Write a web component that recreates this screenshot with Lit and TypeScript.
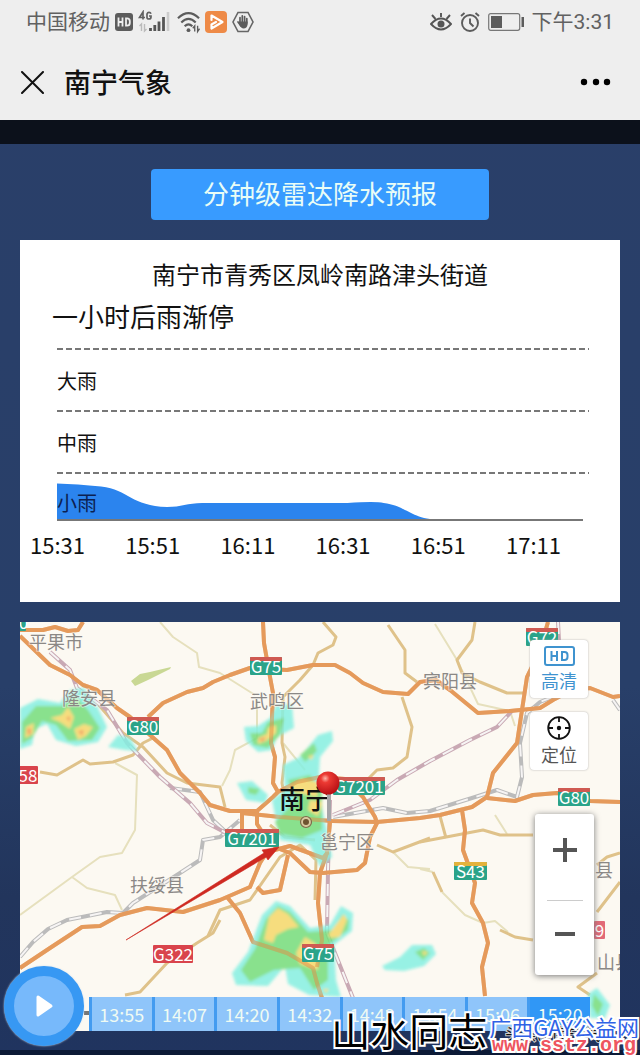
import { LitElement, html, css, svg } from "lit";
import { customElement, property, state } from "lit/decorators.js";
import { classMap } from "lit/directives/class-map.js";

/* ---------- status bar ---------- */

@customElement("status-bar")
class StatusBar extends LitElement {
  static styles = css`
    :host {
      display: flex;
      justify-content: space-between;
      align-items: center;
      height: 44px;
      padding: 0 26px;
      color: #616161;
      font: 21px/28px Roboto, "Noto Sans CJK SC", sans-serif;
    }
    .side {
      display: flex;
      align-items: center;
      gap: 5px;
    }
    .end {
      gap: 8px;
    }
    svg {
      display: block;
    }
  `;

  render() {
    return html`
      <div class="side">
        <span>中国移动</span>
        <svg width="18" height="22" viewBox="0 0 18 22" aria-hidden="true">
          <rect y="2" width="18" height="18" rx="3" fill="#5c5c5c" />
          <path d="M3.500 6.500v9M7.500 6.500v9M3.500 11h4M11 7.300v7.400h1q2.800 0 2.800-2.700v-2q0-2.700-2.800-2.700z" fill="none" stroke="#eee" stroke-width="1.800" />
        </svg>
        <svg width="34" height="24" viewBox="0 0 34 24" aria-hidden="true">
          <path d="M5 9.500V2L1.500 7.500H7M13 3.800Q12.500 2.300 11 2.300T9 4v3.500Q9 9 11 9t2-2V6h-2" fill="none" stroke="#616161" stroke-width="1.700" />
          <path d="M3.500 21v-7l-2 2M6.500 14v7l2-2" fill="none" stroke="#bbb" stroke-width="1.400" />
          <path d="M12.500 21v-3M16.800 21v-6M21 21V11.500M25.500 21V7" stroke="#555" stroke-width="2.800" />
          <path d="M30 21V2" stroke="#ccc" stroke-width="2.600" />
        </svg>
        <svg width="23" height="24" viewBox="0 0 24 24" aria-hidden="true">
          <g fill="none" stroke="#5c5c5c" stroke-width="2.200">
            <path d="M1 8Q12-2.500 23 8M4.500 12.500Q12 5 19.500 12.500M8 16.500q4-4 8 0" />
            <path d="M18.500 22v-6l-2 2.500M21.500 16v6l2-3" stroke-width="1.400" />
          </g>
          <circle cx="12" cy="20.500" r="2" fill="#5c5c5c" />
        </svg>
        <svg width="22" height="22" viewBox="0 0 22 22" aria-hidden="true">
          <rect width="22" height="22" rx="4" fill="#ee8a47" />
          <path d="M6.500 9V4.500L17.500 11 6.500 17.500V13.500L11 11" fill="none" stroke="#fff" stroke-width="2.200" stroke-linejoin="round" stroke-linecap="round" />
        </svg>
        <svg width="22" height="22" viewBox="0 0 22 22" aria-hidden="true">
          <path d="M6 1.500h10l5 9.500-5 9.500H6L1 11z" fill="none" stroke="#666" stroke-width="1.600" />
          <path d="M8 12V6.500M10.300 11V4.800M12.600 11V5.500M14.800 12V7.500M6 11l3 4" stroke="#5c5c5c" stroke-width="1.700" stroke-linecap="round" />
          <path d="M7.200 10.500h8.400v3q-.6 4-4 4-2.500 0-4.400-4z" fill="#5c5c5c" />
        </svg>
      </div>
      <div class="side end">
        <svg width="22" height="22" viewBox="0 0 22 22" fill="none" stroke="#555" stroke-width="1.900" aria-hidden="true">
          <path d="M1 13q10-11 20 0-10 11-20 0zM11 6V2M5.500 8 2 4M16.500 8 20 4" />
          <circle cx="11" cy="13" r="3.500" fill="#555" stroke="none" />
        </svg>
        <svg width="20" height="22" viewBox="0 0 20 22" fill="none" stroke="#5c5c5c" stroke-width="1.900" aria-hidden="true">
          <circle cx="10" cy="12" r="8" />
          <path d="M10 7.500V12l3.500 3.500M1 5l3.500-3M19 5l-3.500-3" />
        </svg>
        <svg width="36" height="18" viewBox="0 0 36 18" aria-hidden="true">
          <rect x=".7" y=".7" width="31" height="16.600" rx="2" fill="none" stroke="#777" stroke-width="1.200" />
          <path d="M3 3h11v12H3zM33.500 4H36v10h-2.500z" fill="#5c5c5c" />
        </svg>
        <span>下午3:31</span>
      </div>
    `;
  }
}

/* ---------- rainfall chart ---------- */

@customElement("rain-chart")
class RainChart extends LitElement {
  static styles = css`
    :host {
      display: block;
      padding: 20px 0 42px;
      background: #fff;
      color: #111;
    }
    h2,
    p {
      margin: 0;
      font-weight: 400;
    }
    .place {
      font-size: 24px;
      line-height: 28px;
      text-align: center;
    }
    .summary {
      padding: 10px 32px 0;
      font-size: 26px;
      line-height: 36px;
    }
    .levels {
      padding: 14px 31px 0 37px;
    }
    .level {
      position: relative;
      box-sizing: border-box;
      height: 62px;
      padding-top: 18px;
      font-size: 20px;
      line-height: 30px;
      background: repeating-linear-gradient(90deg, #777 0 6px, transparent 6px 9px) top / 100% 2px no-repeat;
    }
    .lowest {
      height: 49px;
      padding-top: 16px;
    }
    .label {
      position: relative;
    }
    .lowest .label {
      color: #0b1f52;
    }
    .area {
      position: absolute;
      inset: auto 6px 0 0;
      width: calc(100% - 6px);
      height: 38px;
    }
    .times {
      display: flex;
      justify-content: space-between;
      padding: 7px 59px 0 10px;
      font-size: 22px;
      line-height: 32px;
    }
  `;

  @property({ attribute: false }) times: string[] = [];

  render() {
    return html`
      <h2 class="place">南宁市青秀区凤岭南路津头街道</h2>
      <p class="summary">一小时后雨渐停</p>
      <div class="levels">
        <div class="level"><span class="label">大雨</span></div>
        <div class="level"><span class="label">中雨</span></div>
        <div class="level lowest">
          <svg class="area" viewBox="0 0 525 38" preserveAspectRatio="none" aria-hidden="true">
            <path d="M0 .5Q20 1 44 3.500C72 7 74 23 110 24 124 24 130 20 145 20H290Q318 18 326 20C350 23 352 36 383 37H0z" fill="#2b84ee" />
            <path d="M0 37H525" stroke="#777" stroke-width="2" />
          </svg>
          <span class="label">小雨</span>
        </div>
      </div>
      <div class="times">${this.times.map((t) => html`<time>${t}</time>`)}</div>
    `;
  }
}

/* ---------- radar map ---------- */

const highways = [
  "M20 630H43L55 627 68 631 78 630 83 622",
  "M20 636 50 665 70 675 83 685 97 690 117 708 130 717 150 735 167 750 180 773 200 793 210 805 230 811H257L273 797 278 792 297 782 320 777 345 779 363 797 375 817 377 823 370 837 365 863 357 870 323 873 310 872 290 853 277 848 266 838 257 824 257 811",
  "M148 717 163 703 187 692 203 688 213 682 230 675 250 668 287 670 313 665H335L350 673 363 683 383 692 408 694 420 682 436 680 450 690 478 713 510 711 540 708 553 700 572 690 590 688 613 697 620 696",
  "M263 622 264 643 270 677 273 693 271 743 275 757 273 783 278 792",
  "M548 622 540 650 527 677 522 710 517 743 493 773 487 797 472 807 440 815 420 818 377 822 332 821 280 817 242 813V830",
  "M487 798 515 801 533 795 557 793 590 801 620 802",
  "M462 810 465 830 463 850 475 883 472 903 483 923 488 943 482 967 485 996",
  "M20 968 50 948 82 927 100 926 120 915 147 908 183 912 220 900 227 897 250 887 260 863 267 852 290 846 323 858 328 852",
  "M227 897 240 913 253 942 287 953 313 968 317 983 322 998",
  "M330 822 327 853 320 873 318 903 322 940 317 967",
  "M288 855 280 890 263 893 257 887",
];

const roads = [
  "M40 772 57 775 83 760 90 764 113 762 133 755 143 743 153 738",
  "M97 703 123 733 143 747 167 773 187 783 220 787 225 807",
  "M323 622 336 637 333 645 318 653 313 665 300 680 283 697 282 743 285 757 282 783 285 800",
  "M388 625 405 650V673L417 682M402 697 412 727 407 757 393 768 377 770 367 780",
  "M475 622 472 640 457 660 462 673 480 682 507 693H523",
  "M220 920 213 933 197 943 167 963 140 992 125 995",
  "M208 936 220 910 250 900 280 857 300 845 316 860 315 900",
  "M420 842 483 830 500 835H533M433 872 442 892M500 930 515 937 533 940",
  "M597 912 620 882M597 865 607 857 620 853M597 973 578 987 590 995",
  "M377 845 393 852 430 838M440 816 446 838",
  "M270 825 285 837 315 840",
];

const lanes = [
  "M160 622 173 637 197 653 199 667 220 673 255 695M257 700V738L235 750 230 770 222 786",
  "M115 763 137 775 135 830 122 853 100 857 72 877 20 915M72 877 87 888 115 895 122 910",
  "M435 624 457 660 478 704 510 711 515 726M442 892 465 915 483 923 495 921 508 932",
  "M393 852 408 867 430 869M283 743 305 770M420 869 433 872M495 815 507 834",
];

const railways = [
  "M20 957 33 942 48 929 67 920 107 912 123 913 133 903 180 873 200 860 203 840 220 837 240 820",
  "M333 817 383 808 407 813 430 811 472 798 497 790 517 797 522 777 520 743 527 713 540 702 560 694",
  "M170 788 200 792 213 820 228 834M613 700 620 710",
];

const expressRail = [
  "M50 652 70 670 77 688 107 710 127 743 160 777 190 803 207 823 230 835",
  "M333 815 370 800 397 780 430 761 470 740 497 727 512 711M558 622 559 640",
  "M327 933 353 998M330 800 328 870 327 933",
];

const rain = {
  cyan: [
    "M20 708 38 699 60 703 70 690 84 688 97 706 107 727 98 742 76 746 56 740 47 724 35 729 32 745 20 749z",
    "M108 747 118 735 130 738 138 751 125 750z",
    "M244 727 258 726 270 718 276 705 292 704 294 728 277 737 272 750 258 752 246 741z",
    "M283 765 300 757 318 735 332 731 333 741 320 757 318 790 328 835 332 857 320 867 310 845 280 840 272 800 285 790z",
    "M237 783 252 781 268 795 265 803 246 800z",
    "M262 915 276 901 290 906 310 928 330 925 341 906 353 913 352 931 334 945 336 980 341 997 309 995 288 984 285 966 268 986 236 985 232 973 248 952z",
    "M382 966 400 957 412 945 432 945 436 954 424 966 404 971 385 970z",
    "M588 994 597 988 610 1005 605 1018 590 1018z",
  ],
  green: [
    "M22 722 36 706 62 706 75 696 88 710 100 728 92 740 68 741 56 725 42 721 32 738 22 744z",
    "M250 733 262 733 268 722 284 718 280 735 268 748 253 745z",
    "M288 780 310 775 322 792 322 830 302 838 280 834 275 822 296 800zM300 755 314 743 317 751 305 762z",
    "M248 787 260 789 256 795 248 793z",
    "M266 919 278 906 290 912 308 932 334 930 342 915 349 920 348 930 328 945 328 980 314 990 300 968 274 970 250 982 241 970 255 949z",
    "M415 952 424 948 430 953 423 960z",
    "M594 994 603 1004 598 1016 592 1006z",
  ],
  yellow: [
    "M26 727 34 723 33 734 25 738zM50 718 62 715 68 707 74 717 70 729 60 722zM74 729 84 724 93 727 86 736 78 740z",
    "M258 738 267 734 268 728 276 725 276 733 266 741 258 744z",
    "M286 788 302 779 318 782 317 797 295 792zM310 800 322 802 318 816 308 810zM308 756 314 755 311 760z",
    "M264 940 269 917 278 908 288 914 299 927 288 929 276 935 273 943zM328 935 344 914 347 920 340 937 331 938zM296 953 305 937 316 944 318 970 300 964z",
    "M422 951 428 952 424 956zM323 989 329 989 326 993z",
  ],
  orange: [
    "M27 729 31 728 31 734 28 735zM66 718 70 716 70 722zM78 731 84 730 82 736z",
    "M258 739 266 737 263 742z",
  ],
};

interface Shield {
  x: number;
  y: number;
  w: number;
  text: string;
  top?: string;
  fill?: string;
}

const shields: Shield[] = [
  { x: 0, y: 613, w: 26, text: "G80" },
  { x: 250, y: 657, w: 32, text: "G75" },
  { x: 127, y: 717, w: 32, text: "G80" },
  { x: 526, y: 628, w: 32, text: "G72" },
  { x: 333, y: 777, w: 52, text: "G7201" },
  { x: 558, y: 788, w: 32, text: "G80" },
  { x: 225, y: 829, w: 54, text: "G7201" },
  { x: 302, y: 944, w: 32, text: "G75" },
  { x: 454, y: 862, w: 33, text: "S43", top: "#e3b23c" },
  { x: 153, y: 945, w: 40, text: "G322", fill: "#d9444c" },
  { x: 18, y: 766, w: 20, text: "58", fill: "#d9444c" },
  { x: 594, y: 921, w: 11, text: "9", fill: "#e26a78" },
];

const places: [number, number, string][] = [
  [29, 649, "平果市"],
  [62, 705, "隆安县"],
  [250, 708, "武鸣区"],
  [423, 688, "宾阳县"],
  [130, 892, "扶绥县"],
  [320, 849, "邕宁区"],
  [595, 877, "县"],
  [597, 969, "山县"],
];

@customElement("radar-map")
class RadarMap extends LitElement {
  static styles = css`
    :host {
      display: block;
      position: relative;
      height: 409px;
    }
    .canvas {
      display: block;
      width: 100%;
      height: 100%;
      background: #fcf9f2;
    }
    .line {
      fill: none;
      stroke-linejoin: round;
    }
    .highway {
      stroke: #e59a5b;
      stroke-width: 4px;
    }
    .road {
      stroke: #dfc28a;
      stroke-width: 3px;
    }
    .lane {
      stroke: #e6e0bd;
      stroke-width: 2px;
    }
    .bed {
      stroke: #bbb;
      stroke-width: 4px;
    }
    .ties {
      stroke: #f6f4f4;
      stroke-width: 2px;
      stroke-dasharray: 12 9;
    }
    .bed.express {
      stroke: #c9a9b4;
    }
    .cyan {
      fill: #86f0e2;
    }
    .green {
      fill: #74dd7c;
    }
    .yellow {
      fill: #f6d96a;
    }
    .orange {
      fill: #f09a52;
    }
    .place {
      fill: #8b8886;
      font-size: 18px;
      paint-order: stroke;
      stroke: #fcf9f2;
      stroke-opacity: 0.5;
      stroke-width: 2px;
    }
    .city {
      fill: #111;
      font-size: 26px;
      font-weight: 500;
    }
    .shield {
      fill: #fff;
      font-size: 17px;
      text-anchor: middle;
    }
    button {
      border: 0;
      padding: 0;
      font: inherit;
      cursor: pointer;
    }
    .tools {
      position: absolute;
      top: 18px;
      right: 32px;
      display: grid;
      gap: 14px;
    }
    .tool {
      display: flex;
      flex-direction: column;
      align-items: center;
      justify-content: center;
      gap: 2px;
      width: 58px;
      height: 58px;
      border-radius: 4px;
      background: #fff;
      box-shadow: 0 0 2px #aaa;
      color: #555;
      font-size: 18px;
      line-height: 24px;
    }
    .tool.active {
      color: #3f93cf;
    }
    .zoom {
      position: absolute;
      top: 192px;
      right: 26px;
      display: grid;
      grid-template-rows: 86px 75px;
      width: 59px;
      padding-top: 0;
      border-radius: 3px;
      background: #fff;
      box-shadow: 0 1px 6px #777;
    }
    .zoom button {
      display: grid;
      place-items: center;
      padding-bottom: 14px;
      background: none;
    }
    .zoom button:first-child {
      padding: 0 0 14px;
    }
    .zoom button + button {
      padding-bottom: 7px;
      background: linear-gradient(#ccc, #ccc) top / 36px 1px no-repeat;
    }
    .timeline {
      position: absolute;
      left: 69px;
      right: 30px;
      bottom: 0;
      display: grid;
      grid-auto-flow: column;
      grid-auto-columns: 1fr;
    }
    .slot {
      height: 34px;
      border-left: 3px solid #439bf0;
      background: #8fc5fa;
      color: #effbf3;
      font-size: 18px;
      line-height: 34px;
    }
    .slot.current {
      background: #3097f6;
    }
    .play {
      position: absolute;
      left: -16px;
      bottom: -15px;
      display: grid;
      place-items: center;
      width: 80px;
      height: 80px;
      border: 10px solid #3798f3;
      border-radius: 50%;
      background: #77b9fb;
      box-shadow: 0 0 2px #cde;
    }
  `;

  @property({ attribute: false }) frames: string[] = [];
  @state() private current = 7;

  private lines(kind: string, list: string[]) {
    return list.map((d) => svg`<path class="line ${kind}" d=${d} />`);
  }

  private shield(s: Shield) {
    return svg`
      <rect x=${s.x} y=${s.y} width=${s.w} height="18" rx="1" fill=${s.fill ?? "#2aa389"} />
      ${s.fill ? null : svg`<rect x=${s.x} y=${s.y} width=${s.w} height="4" rx="1" fill=${s.top ?? "#cf5a52"} />`}
      <text class="shield" x=${s.x + s.w / 2} y=${s.y + 16}>${s.text}</text>`;
  }

  render() {
    return html`
      <svg class="canvas" viewBox="20 622 600 409" preserveAspectRatio="xMidYMid slice" role="img" aria-label="雷达地图">
        <defs>
          <filter id="soft" x="-10%" y="-10%" width="120%" height="120%"><feGaussianBlur stdDeviation="1.800" /></filter>
          <radialGradient id="ball" cx=".38" cy=".3" r=".75">
            <stop offset="0" stop-color="#ffb5a8" />
            <stop offset=".25" stop-color="#ec3a33" />
            <stop offset="1" stop-color="#b30d12" />
          </radialGradient>
        </defs>
        <path d="M131 681 140 674 150 672 171 667 170 669 148 680 135 686z" fill="#c9d894" />
        ${this.lines("lane", lanes)} ${this.lines("road", roads)}
        ${this.lines("bed", railways)} ${this.lines("ties", railways)}
        ${this.lines("bed express", expressRail)} ${this.lines("ties", expressRail)}
        ${this.lines("highway", highways)}
        <g filter="url(#soft)" opacity=".85">
          ${Object.entries(rain).map(([tone, list]) => list.map((d) => svg`<path class=${tone} d=${d} />`))}
        </g>
        <g opacity=".5">${this.lines("highway", highways)}</g>
        ${places.map(([x, y, name]) => svg`<text class="place" x=${x} y=${y}>${name}</text>`)}
        ${shields.map((s) => this.shield(s))}
        <circle cx="306" cy="822" r="5.500" fill="#d9c9a0" stroke="#7d6b4a" stroke-width="1.200" />
        <circle cx="306" cy="822" r="3" fill="#6e5330" />
        <text class="city" x="279" y="809">南宁</text>
        <path d="M327 793h4v28h-4z" fill="#a5a5a8" />
        <circle cx="328" cy="783" r="11.500" fill="url(#ball)" />
        <path d="M126 940 264 853 262 850 279 847 268 860 266 857z" fill="#cf2a22" stroke="#cf2a22" stroke-width=".6" />
        <path d="M84 1011h6v4h-6z" fill="#777" />
      </svg>

      <div class="tools">
        <button class="tool active">
          <svg width="31" height="20" viewBox="0 0 31 20" fill="none" stroke="currentColor" stroke-width="2" aria-hidden="true">
            <rect x="1" y="1" width="29" height="18" rx="2" />
            <path d="M7.500 5v10M13 5v10M7.500 10H13M18 6v8h2.500q3 0 3-3V9q0-3-3-3z" />
          </svg>
          高清
        </button>
        <button class="tool">
          <svg width="24" height="24" viewBox="0 0 24 24" fill="none" stroke="#111" stroke-width="1.800" aria-hidden="true">
            <circle cx="12" cy="12" r="10.800" />
            <path d="M12 1v5M12 18v5M1 12h5M18 12h5" />
            <circle cx="12" cy="12" r="2.200" fill="#111" stroke="none" />
          </svg>
          定位
        </button>
      </div>

      <div class="zoom">
        <button aria-label="放大">
          <svg width="24" height="24" viewBox="0 0 24 24" aria-hidden="true"><path d="M12 0v24M0 12h24" stroke="#555" stroke-width="4" /></svg>
        </button>
        <button aria-label="缩小">
          <svg width="20" height="4" viewBox="0 0 20 4" aria-hidden="true"><path d="M0 2h20" stroke="#555" stroke-width="4" /></svg>
        </button>
      </div>

      <div class="timeline">
        ${this.frames.map(
          (t, i) => html`<button
            class=${classMap({ slot: true, current: i === this.current })}
            @click=${() => (this.current = i)}
          >${t}</button>`
        )}
      </div>
      <button class="play" aria-label="播放">
        <svg width="20" height="24" viewBox="0 0 20 24" aria-hidden="true">
          <path d="M4 3v18L17 12z" fill="#fff" stroke="#fff" stroke-width="3" stroke-linejoin="round" />
        </svg>
      </button>
    `;
  }
}

/* ---------- page ---------- */

@customElement("app-root")
class AppRoot extends LitElement {
  static styles = css`
    :host {
      display: block;
      position: relative;
      overflow: hidden;
      font-family: "Noto Sans CJK SC", sans-serif;
      background: linear-gradient(#2a3f69, #283f69 65%, #22355c 85%, #20345f);
    }
    .head {
      background: #eee;
      border-bottom: 24px solid #0c111b;
    }
    .nav {
      display: flex;
      align-items: center;
      gap: 20px;
      height: 76px;
      padding: 0 28px 0 21px;
    }
    .nav h1 {
      flex: 1;
      margin: 0;
      font-size: 27px;
      font-weight: 500;
      line-height: 36px;
      color: #111;
    }
    .icon {
      display: block;
      border: 0;
      padding: 0;
      background: none;
    }
    .icon svg {
      display: block;
    }
    main {
      display: grid;
      gap: 20px;
      padding: 25px 20px 19px;
      border-bottom: 5px solid #0c1a36;
    }
    .forecast {
      justify-self: center;
      width: 338px;
      height: 51px;
      border: 0;
      border-radius: 4px;
      background: #389bff;
      color: #e9fdf6;
      font: 26px/48px "Noto Sans CJK SC", sans-serif;
      padding: 0 0 3px;
    }
    .marks {
      position: absolute;
      right: 1px;
      bottom: 0;
      display: flex;
      align-items: flex-end;
      gap: 2px;
      pointer-events: none;
      white-space: nowrap;
      paint-order: stroke fill;
    }
    .author {
      font-size: 39px;
      line-height: 52px;
      color: #000;
      -webkit-text-stroke: 4px #fff;
    }
    .site {
      position: relative;
      display: grid;
      justify-items: center;
    }
    .site-name {
      font-size: 22px;
      line-height: 22px;
      color: #2f62e6;
      -webkit-text-stroke: 4px #fff;
    }
    .site-url {
      font: bold 20px/18px "Liberation Mono", monospace;
      color: #ee5560;
      -webkit-text-stroke: 4px #fff;
    }
    .source {
      position: absolute;
      left: 16px;
      top: 8px;
      font-size: 16px;
      line-height: 20px;
      color: #111;
      -webkit-text-stroke: 2px #ccc;
    }
    .site-name,
    .site-url {
      position: relative;
    }
  `;

  render() {
    return html`
      <header class="head">
        <status-bar></status-bar>
        <div class="nav">
          <button class="icon" aria-label="关闭">
            <svg width="23" height="23" viewBox="0 0 23 23"><path d="M1 1l21 21M22 1 1 22" stroke="#111" stroke-width="2" stroke-linecap="round" /></svg>
          </button>
          <h1>南宁气象</h1>
          <button class="icon" aria-label="更多">
            <svg width="32" height="8" viewBox="0 0 32 8" fill="#000"><circle cx="4" cy="4" r="3.200" /><circle cx="16" cy="4" r="3.200" /><circle cx="27" cy="4" r="3.200" /></svg>
          </button>
        </div>
      </header>
      <main>
        <button class="forecast">分钟级雷达降水预报</button>
        <rain-chart .times=${["15:31", "15:51", "16:11", "16:31", "16:51", "17:11"]}></rain-chart>
        <radar-map .frames=${["13:55", "14:07", "14:20", "14:32", "14:43", "14:54", "15:06", "15:20"]}></radar-map>
      </main>
      <div class="marks">
        <span class="author">山水同志</span>
        <div class="site">
          <span class="source">头条@南宁气象</span>
          <span class="site-name">广西GAY公益网</span>
          <span class="site-url">www.sstz.org</span>
        </div>
      </div>
    `;
  }
}
